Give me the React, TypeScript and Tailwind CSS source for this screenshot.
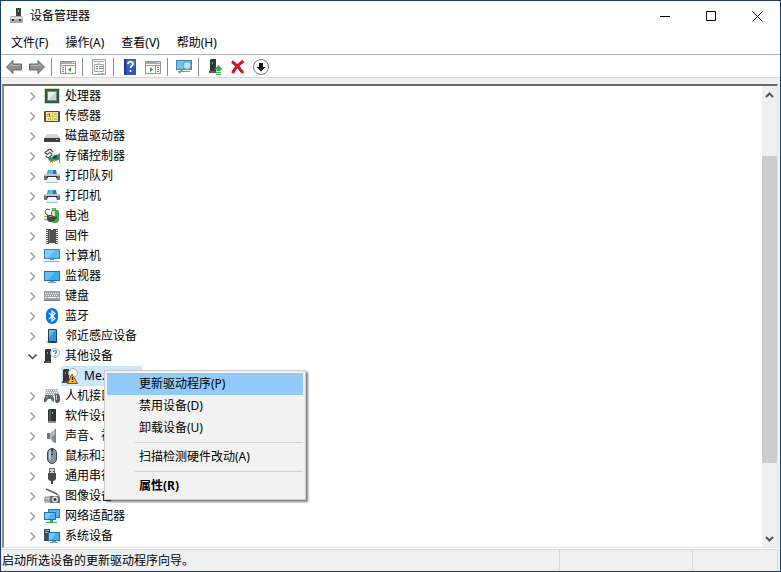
import type { ReactNode } from "react";

function Svg({ children, className = "h-4 w-4" }: { children: ReactNode; className?: string }) {
  return (
    <svg viewBox="0 0 16 16" className={`${className} shrink-0`} fill="none" aria-hidden="true">
      {children}
    </svg>
  );
}

const icons: Record<string, ReactNode> = {
  cpu: (
    <>
      <rect x="0.5" y="0.5" width="15" height="15" stroke="#a3a55c" strokeDasharray="1 1" />
      <rect x="1" y="1" width="14" height="14" fill="#2f5c41" />
      <rect x="4" y="4" width="8" height="8" fill="#c6d3ca" />
      <path d="M4 12V4h8z" fill="#e9efeb" />
      <path d="M3.500 3.500h9v9h-9z" stroke="#6f9480" />
    </>
  ),
  sensor: (
    <>
      <rect x="0" y="3" width="16" height="11" rx="1" fill="#4b4b45" />
      <rect x="2" y="4" width="12" height="9" fill="#efe6a6" />
      <path d="M2 8.500h12M8.500 4v9" stroke="#e0c050" />
      <path d="M3 6.500h3M5.500 5v4" stroke="#d2543b" />
      <path d="M10 5h3v2h-3zM4 10h3v2H4zM10 10h3v2h-3z" fill="#b6cc74" />
    </>
  ),
  disk: (
    <>
      <path d="M3 6h10l3 4H0z" fill="#d3d5d6" />
      <rect x="0" y="10" width="16" height="4" rx="0.5" fill="#3b3e41" />
      <rect x="12" y="11" width="2" height="1" fill="#5be26a" />
    </>
  ),
  storage: (
    <>
      <path d="M5.500 1L1 4.500 3 6.500l3-2 2 1.500M1.500 8l3 2 4-3.500M9 4L6 1" stroke="#4d5154" strokeWidth="1.300" />
      <path d="M6 9l9-3v6l-8 2-3-3z" fill="#3a8a68" />
      <path d="M9 8l4-1v3l-4 1z" fill="#234b41" />
      <path d="M7 8l2-1v2l-2 1z" fill="#8ed1ae" />
      <path d="M6.500 13v2M8.500 13v2M10.500 12v2" stroke="#e0ae2e" />
      <path d="M15.500 5v10" stroke="#7b8286" />
    </>
  ),
  printer: (
    <>
      <path d="M4 2h8l1 4H3z" fill="#2f8f9e" />
      <path d="M5 2h4v4H4z" fill="#4cc3ec" />
      <path d="M9 2h3v4H9z" fill="#2a6fd0" />
      <path d="M1 6h14l1 2v4H0V8z" fill="#6a6f73" />
      <path d="M1 6h14v2H1z" fill="#c4c8cb" />
      <path d="M3 8h10v2H3z" fill="#2d3034" />
      <path d="M4 9h8l2 6H2z" fill="#eef5f9" />
      <path d="M2 14.500h12" stroke="#a9bac4" />
    </>
  ),
  battery: (
    <>
      <path d="M8 0h4v2h2l1 2v9l-2 2H9l-2-2V4l1-2z" fill="#3fa64b" />
      <path d="M8 3h3v5H8z" fill="#c5ecba" />
      <path d="M9 0h2v2H9z" fill="#9aa39c" />
      <path d="M6 2C3 0 0 2 2 6l3 2" stroke="#555" />
      <path d="M3 7h5l3 2v3l-3 2H5l-2-2z" fill="#464b48" />
      <path d="M5 8h3v1H5z" fill="#8e9490" />
      <path d="M0 8.500h3M0 11.500h3" stroke="#b0a34a" strokeWidth="1.400" />
      <path d="M10 11l3-2" stroke="#2e3330" strokeWidth="1.400" />
    </>
  ),
  firmware: (
    <>
      <path d="M3.500 1v15M12.500 1v15" stroke="#4c4c4c" strokeWidth="3" strokeDasharray="1 1" />
      <path d="M4 1h3v1h2V1h3v14H4z" fill="#4f5052" />
      <path d="M5 3h1v11H5z" fill="#747678" />
    </>
  ),
  computer: (
    <>
      <path d="M0 1h16v10H0z" fill="#3289c7" />
      <path d="M1 2h14v8H1z" fill="#5bbcf6" />
      <path d="M1 2h10L4 10H1z" fill="#82d0fb" />
      <path d="M6 11h4v1H6z" fill="#6c8797" />
      <path d="M1 13h14l1 1H0z" fill="#94b1c0" />
    </>
  ),
  monitor: (
    <>
      <path d="M0 3h16v10H0z" fill="#286e9f" />
      <path d="M1 4h14v8H1z" fill="#3eaaf0" />
      <path d="M1 4h10l-7 8H1z" fill="#67bff4" />
      <path d="M6 13h4v1H6zM4 14h8v1H4z" fill="#829dab" />
    </>
  ),
  keyboard: (
    <>
      <rect x="0" y="3" width="16" height="10" fill="#9ea4a8" />
      <path d="M1 5.500h14M2 7.500h12" stroke="#f0f2f3" strokeDasharray="1 1" />
      <path d="M1 9.500h2M4 9.500h8M13 9.500h2" stroke="#f3f5f6" />
      <path d="M0 12.500h16" stroke="#737a7f" />
    </>
  ),
  bluetooth: (
    <>
      <rect x="2" y="0" width="12" height="16" rx="6" fill="#0878e8" />
      <path d="M5 5l6 5.500L8 13V3l3 2.500L5 11" stroke="#fff" strokeWidth="1.200" />
    </>
  ),
  proximity: (
    <>
      <path d="M1 13h14l-2 2H3z" fill="#e9c6a2" />
      <rect x="4" y="1" width="9" height="14" rx="1" fill="#2a3f50" />
      <path d="M5 2h7v11H5z" fill="#3397df" />
      <path d="M5 2h6l-6 8z" fill="#69bcf2" />
    </>
  ),
  unknown: (
    <>
      <path d="M1 2l1-1h5v12H1z" fill="#323536" />
      <path d="M0 13h7v2H0z" fill="#505456" />
      <path d="M3 4h1v2H3z" fill="#35df45" />
      <circle cx="11" cy="5" r="4.500" fill="#f6fafc" stroke="#a5aeb5" />
      <path d="M9.500 4c0-2 3-2 3 0 0 1-1.500 1-1.500 2M11 7v1" stroke="#257ab8" strokeWidth="1.200" />
    </>
  ),
  warning: (
    <>
      <path d="M1 2l1-1h5v12H1z" fill="#323536" />
      <path d="M0 13h7v2H0z" fill="#505456" />
      <path d="M3 4h1v2H3z" fill="#35df45" />
      <circle cx="11" cy="5" r="4.500" fill="#f6fafc" stroke="#a5aeb5" />
      <path d="M10 6l5.500 9.500h-10z" fill="#f5b52c" stroke="#80540f" />
      <path d="M10.500 9v3M10.500 13v1" stroke="#292008" strokeWidth="1.300" />
    </>
  ),
  hid: (
    <>
      <path d="M2 1h12l1 7H1z" fill="#b4b9bd" />
      <path d="M3 2.500h11M2 4.500h12M3 6.500h10" stroke="#fff" strokeDasharray="1 1" />
      <path d="M2 7h6l2 3v4l-2-1-1-2H4l-2 3H0v-3z" fill="#5b6670" />
      <path d="M2 9h2M7 9h1" stroke="#65b8e8" />
      <path d="M11 6h4l1 3v4l-2 2h-2l-1-2z" fill="#555c61" />
      <path d="M12.500 7v5" stroke="#c0c9ce" />
    </>
  ),
  software: (
    <>
      <path d="M4 2l1-1h7v12H4z" fill="#303334" />
      <path d="M5 2h2v11H5z" fill="#515657" />
      <path d="M4 13h8v2H4z" fill="#8b9092" />
      <path d="M8 4h1v2H8z" fill="#37ef4c" />
    </>
  ),
  audio: (
    <>
      <path d="M3 5h3v6H3z" fill="#6f767a" />
      <path d="M6 5l5-4v14l-5-4z" fill="#b4babd" />
      <path d="M8 8l3-1v8l-3-2z" fill="#858b8f" />
      <path d="M11.500 1v14" stroke="#7f868a" />
    </>
  ),
  mouse: (
    <>
      <rect x="3.500" y="0.500" width="9" height="15" rx="4.500" fill="#8195a4" stroke="#3d454b" />
      <path d="M5 3l2-1v10l-2-1z" fill="#bcc9d2" />
      <path d="M8 1v6" stroke="#293f50" strokeWidth="2" />
      <path d="M8 3v3" stroke="#6db6e3" />
    </>
  ),
  usb: (
    <>
      <path d="M5.500 0.500h5V6h-5z" fill="#d1d3d4" stroke="#686b6e" />
      <path d="M6 3h1v1H6zM9 3h1v1H9z" fill="#444" />
      <path d="M4 5h8v6l-2 2H6l-2-2z" fill="#46494b" />
      <path d="M8 12v4" stroke="#46494b" strokeWidth="2" />
    </>
  ),
  imaging: (
    <>
      <path d="M2 1l11 5" stroke="#606466" strokeWidth="1.500" />
      <path d="M12 6l3 1v3" stroke="#707577" />
      <path d="M0 12h6M1 9h5v5H1z" fill="#c8cdd0" stroke="#83898c" />
      <path d="M6 8h8l2 2v5H6z" fill="#66706f" />
      <circle cx="11" cy="11.500" r="3" fill="#e0e7e9" />
      <circle cx="11" cy="11.500" r="1.500" fill="#24343b" />
    </>
  ),
  network: (
    <>
      <path d="M4 1h12v9H4z" fill="#267ab6" />
      <path d="M5 2h10v7H5z" fill="#54b5ed" />
      <path d="M0 4h12v8H0z" fill="#226e9e" />
      <path d="M1 5h10v6H1z" fill="#48b6f5" />
      <path d="M1 5h7l-5 6H1z" fill="#76cbf8" />
      <path d="M6 12h3v2h4v1H2v-1h4z" fill="#37a851" />
    </>
  ),
  system: (
    <>
      <path d="M0 1h6v12H0z" fill="#414a50" />
      <path d="M1 2h4v1H1zM1 4h4v1H1z" fill="#9ca7ad" />
      <path d="M4 4h12v9H4z" fill="#256c9d" />
      <path d="M5 5h10v7H5z" fill="#45adf0" />
      <path d="M5 5h7l-5 7H5z" fill="#76c7f7" />
      <path d="M8 13h4v1H8zM6 14h8v1H6z" fill="#8099a8" />
    </>
  ),
};

type Device = { name: string; icon: string; children?: Device[] };

const devices: Device[] = [
  { name: "处理器", icon: "cpu" },
  { name: "传感器", icon: "sensor" },
  { name: "磁盘驱动器", icon: "disk" },
  { name: "存储控制器", icon: "storage" },
  { name: "打印队列", icon: "printer" },
  { name: "打印机", icon: "printer" },
  { name: "电池", icon: "battery" },
  { name: "固件", icon: "firmware" },
  { name: "计算机", icon: "computer" },
  { name: "监视器", icon: "monitor" },
  { name: "键盘", icon: "keyboard" },
  { name: "蓝牙", icon: "bluetooth" },
  { name: "邻近感应设备", icon: "proximity" },
  { name: "其他设备", icon: "unknown", children: [{ name: "Me...", icon: "warning" }] },
  { name: "人机接口设备", icon: "hid" },
  { name: "软件设备", icon: "software" },
  { name: "声音、视频和游戏控制器", icon: "audio" },
  { name: "鼠标和其他指针设备", icon: "mouse" },
  { name: "通用串行总线控制器", icon: "usb" },
  { name: "图像设备", icon: "imaging" },
  { name: "网络适配器", icon: "network" },
  { name: "系统设备", icon: "system" },
];

const menus = ["文件(F)", "操作(A)", "查看(V)", "帮助(H)"];

const arrow = (
  <>
    <path d="M0.500 8L7 1.500v3.500h8.500v6H7v3.500z" fill="#8d8d8d" stroke="#666" />
    <path d="M3 7.500L6 5v1.500h8" stroke="#b5b5b5" />
  </>
);

const toolGroups: { label: string; icon: ReactNode }[][] = [
  [
    { label: "后退", icon: arrow },
    { label: "前进", icon: <g transform="matrix(-1 0 0 1 16 0)">{arrow}</g> },
  ],
  [
    {
      label: "显示/隐藏控制台树",
      icon: (
        <>
          <path d="M0.500 2.500h15v12H0.500z" fill="#fff" stroke="#8b959d" />
          <path d="M1 3h14v2H1z" fill="#a3adb5" />
          <path d="M12 3.500h3" stroke="#fff" strokeDasharray="1 1" />
          <path d="M1 6.500h14M5.500 7v7" stroke="#8b959d" />
          <path d="M2 8.500h2M2 10.500h2M2 12.500h2" stroke="#4f83ad" />
          <path d="M11 8v5l-3-2.500z" fill="#3d9f36" />
        </>
      ),
    },
  ],
  [
    {
      label: "属性",
      icon: (
        <>
          <path d="M1.500 0.500h13v15h-13z" fill="#fafafa" stroke="#9a9fa3" />
          <path d="M3 2.500h10" stroke="#a0a7ad" />
          <path d="M3.500 5.500h9v7h-9z" stroke="#a5abb0" />
          <path d="M5 7.500h2M5 9.500h2M8 7.500h4M8 9.500h4" stroke="#7990a3" />
          <path d="M6 5h3M7 14.500h2M10 14.500h3" stroke="#a5abb0" />
        </>
      ),
    },
  ],
  [
    {
      label: "帮助",
      icon: (
        <>
          <path d="M2 0h12v16H2z" fill="#3157b7" />
          <path d="M2 0h2v16H2z" fill="#183b8d" />
          <path d="M5 1h8v6H5z" fill="#496dcc" />
          <path d="M6 5c0-3 5-3 5 0 0 2-2.500 2-2.500 4M8.500 11v2" stroke="#fff" strokeWidth="1.700" />
        </>
      ),
    },
    {
      label: "显示/隐藏操作窗格",
      icon: (
        <>
          <path d="M0.500 2.500h15v12H0.500z" fill="#fff" stroke="#8b959d" />
          <path d="M1 3h14v2H1z" fill="#a3adb5" />
          <path d="M12 3.500h3" stroke="#fff" strokeDasharray="1 1" />
          <path d="M1 6.500h14M10.500 7v7" stroke="#8b959d" />
          <path d="M12 8.500h2M12 10.500h2M12 12.500h2" stroke="#4f83ad" />
          <path d="M5 8v5l3-2.500z" fill="#3d9f36" />
        </>
      ),
    },
  ],
  [
    {
      label: "扫描检测硬件改动",
      icon: (
        <>
          <path d="M0 1h16v10H0z" fill="#3487b8" />
          <path d="M1 2h14v8H1z" fill="#6dc4ef" />
          <path d="M2 12h12v1H2z" fill="#84959e" />
          <path d="M8 9l-5 5" stroke="#7b919e" strokeWidth="1.600" />
          <circle cx="11" cy="6.500" r="4" fill="#b5e3f8" stroke="#6a94aa" />
        </>
      ),
    },
  ],
  [
    {
      label: "更新驱动程序",
      icon: (
        <>
          <path d="M3 1l1-1h5v12H3z" fill="#303536" />
          <path d="M2 12h7v2H2z" fill="#555b5d" />
          <path d="M5 3h1v2H5z" fill="#35df45" />
          <path d="M11.500 6l4.500 4.500h-2.500V12h-4v-1.500H7zM9 13h5v1H9zM9 15h5v1H9z" fill="#35a851" />
        </>
      ),
    },
    {
      label: "卸载设备",
      icon: <path d="M2 2.500c4 3 8 7 11 11.500M13.500 2C9 5 5 9 2.500 14" stroke="#d01525" strokeWidth="3" />,
    },
    {
      label: "禁用设备",
      icon: (
        <>
          <circle cx="8" cy="8" r="7.500" fill="#fff" stroke="#77797b" />
          <path d="M6 4h4v4h2.500L8 12.500 3.500 8H6z" fill="#151515" />
        </>
      ),
    },
  ],
];

const contextGroups = [
  ["更新驱动程序(P)", "禁用设备(D)", "卸载设备(U)"],
  ["扫描检测硬件改动(A)"],
  ["属性(R)"],
];

function ContextMenu() {
  return (
    <div
      role="menu"
      className="absolute top-1 left-[43px] z-10 w-[202px] border border-[#cccccc] bg-[#f2f2f2] p-0.5 shadow-[2px_2px_2px_rgba(0,0,0,0.5)]"
    >
      {contextGroups.map((group, g) => (
        <div key={group[0]}>
          {g > 0 && <div className="my-[3px] ml-7 h-px bg-[#d0d0d0]" />}
          {group.map((label, i) => (
            <button
              key={label}
              role="menuitem"
              className={`flex h-[22px] w-full items-center pl-8 text-left ${
                g === 0 && i === 0 ? "bg-[#91c9f7]" : ""
              } ${g === 2 ? "font-bold" : ""}`}
            >
              {label}
            </button>
          ))}
        </div>
      ))}
    </div>
  );
}

function DeviceRow({ device }: { device: Device }) {
  const open = !!device.children;
  return (
    <li>
      <div className="flex h-5 items-center pl-6">
        <button aria-label={`${open ? "折叠" : "展开"} ${device.name}`} className="mr-[7px] w-[9px]">
          <svg viewBox="0 0 9 9" className="h-[9px] w-[9px]" fill="none" strokeWidth="1.500">
            {open ? <path d="M0.500 2.500l4 4 4-4" stroke="#404040" /> : <path d="M2.500 0.500l4 4-4 4" stroke="#a0a0a0" />}
          </svg>
        </button>
        <Svg>{icons[device.icon]}</Svg>
        <span className="ml-[5px] whitespace-nowrap">{device.name}</span>
      </div>
      {device.children && (
        <ul className="pl-[57px]">
          {device.children.map((child) => (
            <li key={child.name} className="relative flex h-5 w-[81px] items-center bg-[#cce8ff] pl-px">
              <Svg>{icons[child.icon]}</Svg>
              <span className="ml-1.5">{child.name}</span>
              <ContextMenu />
            </li>
          ))}
        </ul>
      )}
    </li>
  );
}

function Scrollbar() {
  return (
    <div className="flex w-[15px] shrink-0 flex-col bg-[#f0f0f0]">
      <button aria-label="向上滚动" className="flex h-[17px] items-center justify-center">
        <svg viewBox="0 0 9 6" className="h-1.5 w-[9px]" fill="none">
          <path d="M1 5l3.500-3.500L8 5" stroke="#555" strokeWidth="2" />
        </svg>
      </button>
      <div className="grow-[53]" />
      <div className="grow-[307] bg-[#cdcdcd]" />
      <div className="grow-[67]" />
      <button aria-label="向下滚动" className="flex h-[17px] items-center justify-center">
        <svg viewBox="0 0 9 6" className="h-1.5 w-[9px]" fill="none">
          <path d="M1 1l3.500 3.500L8 1" stroke="#555" strokeWidth="2" />
        </svg>
      </button>
    </div>
  );
}

export default function App() {
  return (
    <div className="flex min-h-screen flex-col border border-[#1d3c68] bg-white font-['Noto_Sans','Noto_Sans_CJK_SC',sans-serif] text-[12px] leading-4 text-black">
      <header className="flex h-[30px] items-center pl-2">
        <Svg>
          <path d="M7 0h5v8H7z" fill="#3c4144" />
          <path d="M9 2h1v2H9z" fill="#45dc57" />
          <path d="M2 8h11l1 2v5H1v-5z" fill="#a6aaae" />
          <path d="M2 9h11v2H2z" fill="#dfe1e3" />
          <path d="M3 11h2v2H3zM10 11h2v2h-2z" fill="#34383a" />
        </Svg>
        <h1 className="ml-[5px] grow">设备管理器</h1>
        <button aria-label="最小化" className="flex h-full w-[46px] items-center justify-center">
          <svg viewBox="0 0 11 11" className="h-[11px] w-[11px]" fill="none" stroke="#000">
            <path d="M0 5.500h10" />
          </svg>
        </button>
        <button aria-label="最大化" className="flex h-full w-[46px] items-center justify-center">
          <svg viewBox="0 0 11 11" className="h-[11px] w-[11px]" fill="none" stroke="#000">
            <path d="M0.500 0.500h9v9h-9z" />
          </svg>
        </button>
        <button aria-label="关闭" className="flex h-full w-[46px] items-center justify-center">
          <svg viewBox="0 0 11 11" className="h-[11px] w-[11px]" fill="none" stroke="#000">
            <path d="M0.500 0.500l10 10M10.500 0.500l-10 10" />
          </svg>
        </button>
      </header>

      <nav className="flex h-6 items-center gap-px border-b border-[#aeb1b4] pt-px pl-0.5">
        {menus.map((label) => (
          <button key={label} className="px-2">
            {label}
          </button>
        ))}
      </nav>

      <div className="flex h-[23px] items-center border-b border-[#d7d7d7] pt-0.5 pl-px">
        {toolGroups.map((group, g) => (
          <div key={group[0].label} className="flex items-center">
            {g > 0 && <div className="mr-1 ml-[3px] h-[18px] w-px bg-[#8d8d8d]" />}
            {group.map((tool) => (
              <button key={tool.label} aria-label={tool.label} className="flex w-[23px] justify-center">
                <Svg>{tool.icon}</Svg>
              </button>
            ))}
          </div>
        ))}
      </div>

      <main className="flex grow flex-col bg-[#f0f0f0] pt-1.5 pr-0.5 pl-px">
        <div className="flex grow border-t-2 border-r border-b border-l-2 border-t-[#696969] border-r-[#e3e3e3] border-b-[#e3e3e3] border-l-[#8a8a8a] bg-white">
          <ul className="min-w-0 grow">
            {devices.map((device) => (
              <DeviceRow key={device.name} device={device} />
            ))}
          </ul>
          <Scrollbar />
        </div>
      </main>

      <footer className="mt-px flex h-[22px] border-t border-[#d7d7d7] bg-[#f0f0f0] pr-0.5">
        <p className="flex grow items-center border-r border-[#d7d7d7] pl-px">启动所选设备的更新驱动程序向导。</p>
        <div className="w-[133px] border-r border-[#d7d7d7]" />
        <div className="w-[85px] border-r border-[#d7d7d7]" />
      </footer>
    </div>
  );
}
